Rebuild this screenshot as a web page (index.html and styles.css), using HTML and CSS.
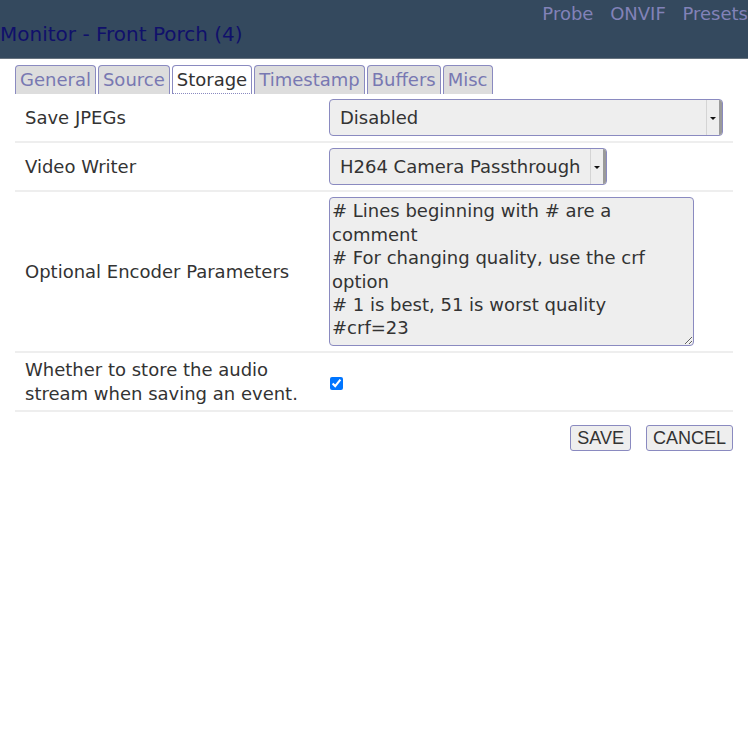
FILE: index.html
```html
<!DOCTYPE html>
<html lang="en">
<head>
    <meta charset="UTF-8">
    <meta name="viewport" content="width=device-width, initial-scale=1.0">
    <title>Monitor - Front Porch (4)</title>
    <link rel="stylesheet" href="styles.css">
</head>
<body>
    <!-- Header with monitor name and tool links -->
    <div class="header">
        <div class="header-links">
            <a href="#">Probe</a>
            <a href="#">ONVIF</a>
            <a href="#">Presets</a>
        </div>
        <h1>Monitor - Front Porch (4)</h1>
    </div>

    <div class="content">
        <ul class="tabs">
            <li><a href="#">General</a></li>
            <li><a href="#">Source</a></li>
            <li class="active"><a href="#">Storage</a></li>
            <li><a href="#">Timestamp</a></li>
            <li><a href="#">Buffers</a></li>
            <li><a href="#">Misc</a></li>
        </ul>

        <!-- Storage settings -->
        <table class="settings">
            <tbody>
                <tr>
                    <td class="label">Save JPEGs</td>
                    <td>
                        <span class="select-wrap full">
                            <select name="SaveJPEGs">
                                <option selected>Disabled</option>
                                <option>Frames only</option>
                                <option>Analysis images only</option>
                            </select>
                        </span>
                    </td>
                </tr>
                <tr>
                    <td class="label">Video Writer</td>
                    <td>
                        <span class="select-wrap">
                            <select name="VideoWriter">
                                <option>Disabled</option>
                                <option>X264 Encode</option>
                                <option selected>H264 Camera Passthrough</option>
                            </select>
                        </span>
                    </td>
                </tr>
                <tr>
                    <td class="label">Optional Encoder Parameters</td>
                    <td>
                        <textarea name="EncoderParameters" rows="6"># Lines beginning with # are a comment
# For changing quality, use the crf option
# 1 is best, 51 is worst quality
#crf=23</textarea>
                    </td>
                </tr>
                <tr>
                    <td class="label">Whether to store the audio stream when saving an event.</td>
                    <td><input type="checkbox" name="RecordAudio" checked></td>
                </tr>
            </tbody>
        </table>

        <div class="actions">
            <button type="submit">SAVE</button>
            <button type="button">CANCEL</button>
        </div>
    </div>
</body>
</html>
```

FILE: styles.css
```css
body {
    font-family: "DejaVu Sans", Verdana, sans-serif;
    font-size: 18px;
    line-height: 1.3;
    color: #333;
    background: #fff;
    margin: 0;
}
a {
    text-decoration: none;
}
.header {
    background-color: #34495e;
    border-bottom: 1px solid #66727e;
    height: 58px;
}
.header-links {
    text-align: right;
    line-height: 20px;
    padding-top: 4px;
}
.header-links a {
    color: #8282b8;
    margin-left: 11px;
}
h1 {
    margin: 0;
    font-size: 20px;
    font-weight: normal;
    line-height: 20px;
    color: #10106b;
}
.content {
    padding: 0 15px;
}
.tabs {
    list-style: none;
    margin: 6px 0 0;
    padding: 0;
    display: flex;
    gap: 2px;
}
.tabs li {
    border: 1px solid #8a8ac0;
    border-bottom: none;
    border-radius: 4px 4px 0 0;
    background-color: #ddd;
    padding: 2px 4px 3px;
}
.tabs li a {
    color: #7878b2;
}
.tabs li.active {
    background-color: #fff;
    border-bottom: 1px dotted #8a8ac0;
    padding-bottom: 2px;
}
.tabs li.active a {
    color: #333;
}
.settings {
    width: 100%;
    border-collapse: collapse;
}
.settings td {
    padding: 5px 10px;
    border-bottom: 2px solid #eee;
    vertical-align: middle;
}
.settings td.label {
    width: 284px;
}
.select-wrap {
    position: relative;
    display: inline-block;
}
.select-wrap.full {
    display: block;
}
.select-wrap select {
    appearance: none;
    -webkit-appearance: none;
    font: inherit;
    line-height: 23px;
    color: #333;
    background-color: #eee;
    border: 1px solid #8a8ac0;
    border-radius: 4px;
    padding: 6px 25px 6px 10px;
    margin: 0;
}
.select-wrap.full select {
    width: 100%;
}
/* dropdown button on the right side of the select */
.select-wrap::after {
    content: "";
    position: absolute;
    top: 1px;
    bottom: 1px;
    right: 1px;
    width: 12px;
    border-left: 1px solid #d4d4d4;
    border-right: 3px solid #9a9a9a;
    border-radius: 0 3px 3px 0;
    background-color: #eee;
    pointer-events: none;
}
.select-wrap::before {
    content: "";
    position: absolute;
    top: 50%;
    right: 7px;
    margin-top: -1px;
    border-left: 3px solid transparent;
    border-right: 3px solid transparent;
    border-top: 3px solid #111;
    z-index: 1;
    pointer-events: none;
}
textarea {
    display: block;
    box-sizing: border-box;
    width: 365px;
    height: 149px;
    font: inherit;
    line-height: 23.4px;
    color: #333;
    background-color: #eee;
    border: 1px solid #8a8ac0;
    border-radius: 4px;
    padding: 1px 2px;
    margin: 0;
}
input[type="checkbox"] {
    margin: 8px 3px 2px 1px;
}
.actions {
    display: flex;
    justify-content: flex-end;
    gap: 15px;
    margin-top: 13px;
}
.actions button {
    font-family: "Liberation Sans", Arial, sans-serif;
    font-size: 18px;
    line-height: 20px;
    color: #333;
    background-color: #eee;
    border: 1px solid #8a8ac0;
    border-radius: 3px;
    padding: 2px 6px;
    cursor: pointer;
}
```
